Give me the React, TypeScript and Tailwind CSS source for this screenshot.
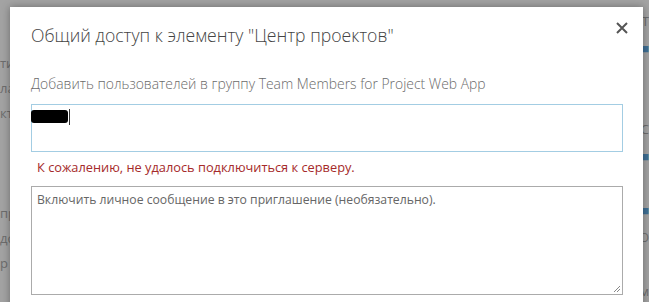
const leftBits = ["", "", "ти", "ла", "кт", "", "", "", "пр", "дс", "р"];
const rightBits = ["T", "■", "", "", "С", "■", "", "■", "Ю", "", "м"];

export default function App() {
  return (
    <div className="relative w-[649px] h-[302px] overflow-hidden bg-[#a3a3a3] font-['Open_Sans',sans-serif]">
      {/* page behind the dimmed overlay */}
      <div className="flex h-full justify-between">
        <div className="flex w-[10px] flex-col gap-[6px] overflow-hidden pt-[4px] text-[13px] leading-[19px] text-[#6d6d6d]">
          {leftBits.map((t, i) => (
            <span key={i} className="whitespace-nowrap">{t || "\u00a0"}</span>
          ))}
        </div>
        <div className="flex w-[6px] flex-col items-end gap-[8px] overflow-hidden pt-[12px] text-[13px] leading-[19px] text-[#6d6d6d]">
          {rightBits.map((t, i) => (
            <span key={i} className={t === "■" ? "text-[#3f6f95]" : ""}>{t || "\u00a0"}</span>
          ))}
        </div>
      </div>

      {/* dialog */}
      <div className="absolute left-[10px] top-[7px] w-[633px] h-[310px] bg-white shadow-[0_0_8px_rgba(0,0,0,0.35)]">
        <div className="flex items-start justify-between pl-[21px] pr-[15px] pt-[14px]">
          <h1 className="text-[17.6px] font-light leading-[28px] text-[#444]">
            Общий доступ к элементу "Центр проектов"
          </h1>
          <button className="mt-[1px] text-[#555]">
            <svg width="12" height="12" viewBox="0 0 12 12">
              <path d="M1 1L11 11M11 1L1 11" stroke="currentColor" strokeWidth="2" />
            </svg>
          </button>
        </div>

        <div className="px-[21px]">
          <p className="mt-[25px] text-[13.9px] font-light leading-[20px] text-[#6a6a6a]">
            Добавить пользователей в группу Team Members for Project Web App
          </p>

          <div className="mt-[10px] flex h-[48px] w-[592px] items-start border border-[#a3cde3] pt-[5px]">
            <span className="-ml-px h-[13px] w-[37px] rounded-[3px] bg-black" />
            <span className="ml-[1px] mt-[-1px] h-[16px] w-px bg-[#333]" />
          </div>

          <p className="mt-[5px] pl-[6px] text-[12.8px] leading-[20px] text-[#a52a2a]">
            К сожалению, не удалось подключиться к серверу.
          </p>

          <div className="relative mt-[9px] h-[109px] w-[592px] border border-[#ababab] px-[5px] pt-[3px]">
            <p className="text-[12.2px] leading-[20px] text-[#666]">
              Включить личное сообщение в это приглашение (необязательно).
            </p>
            <svg className="absolute bottom-[1px] right-[1px]" width="9" height="9" viewBox="0 0 9 9">
              <path d="M8 2L2 8M8 5L5 8" stroke="#888" strokeWidth="1" />
            </svg>
          </div>
        </div>
      </div>
    </div>
  );
}
